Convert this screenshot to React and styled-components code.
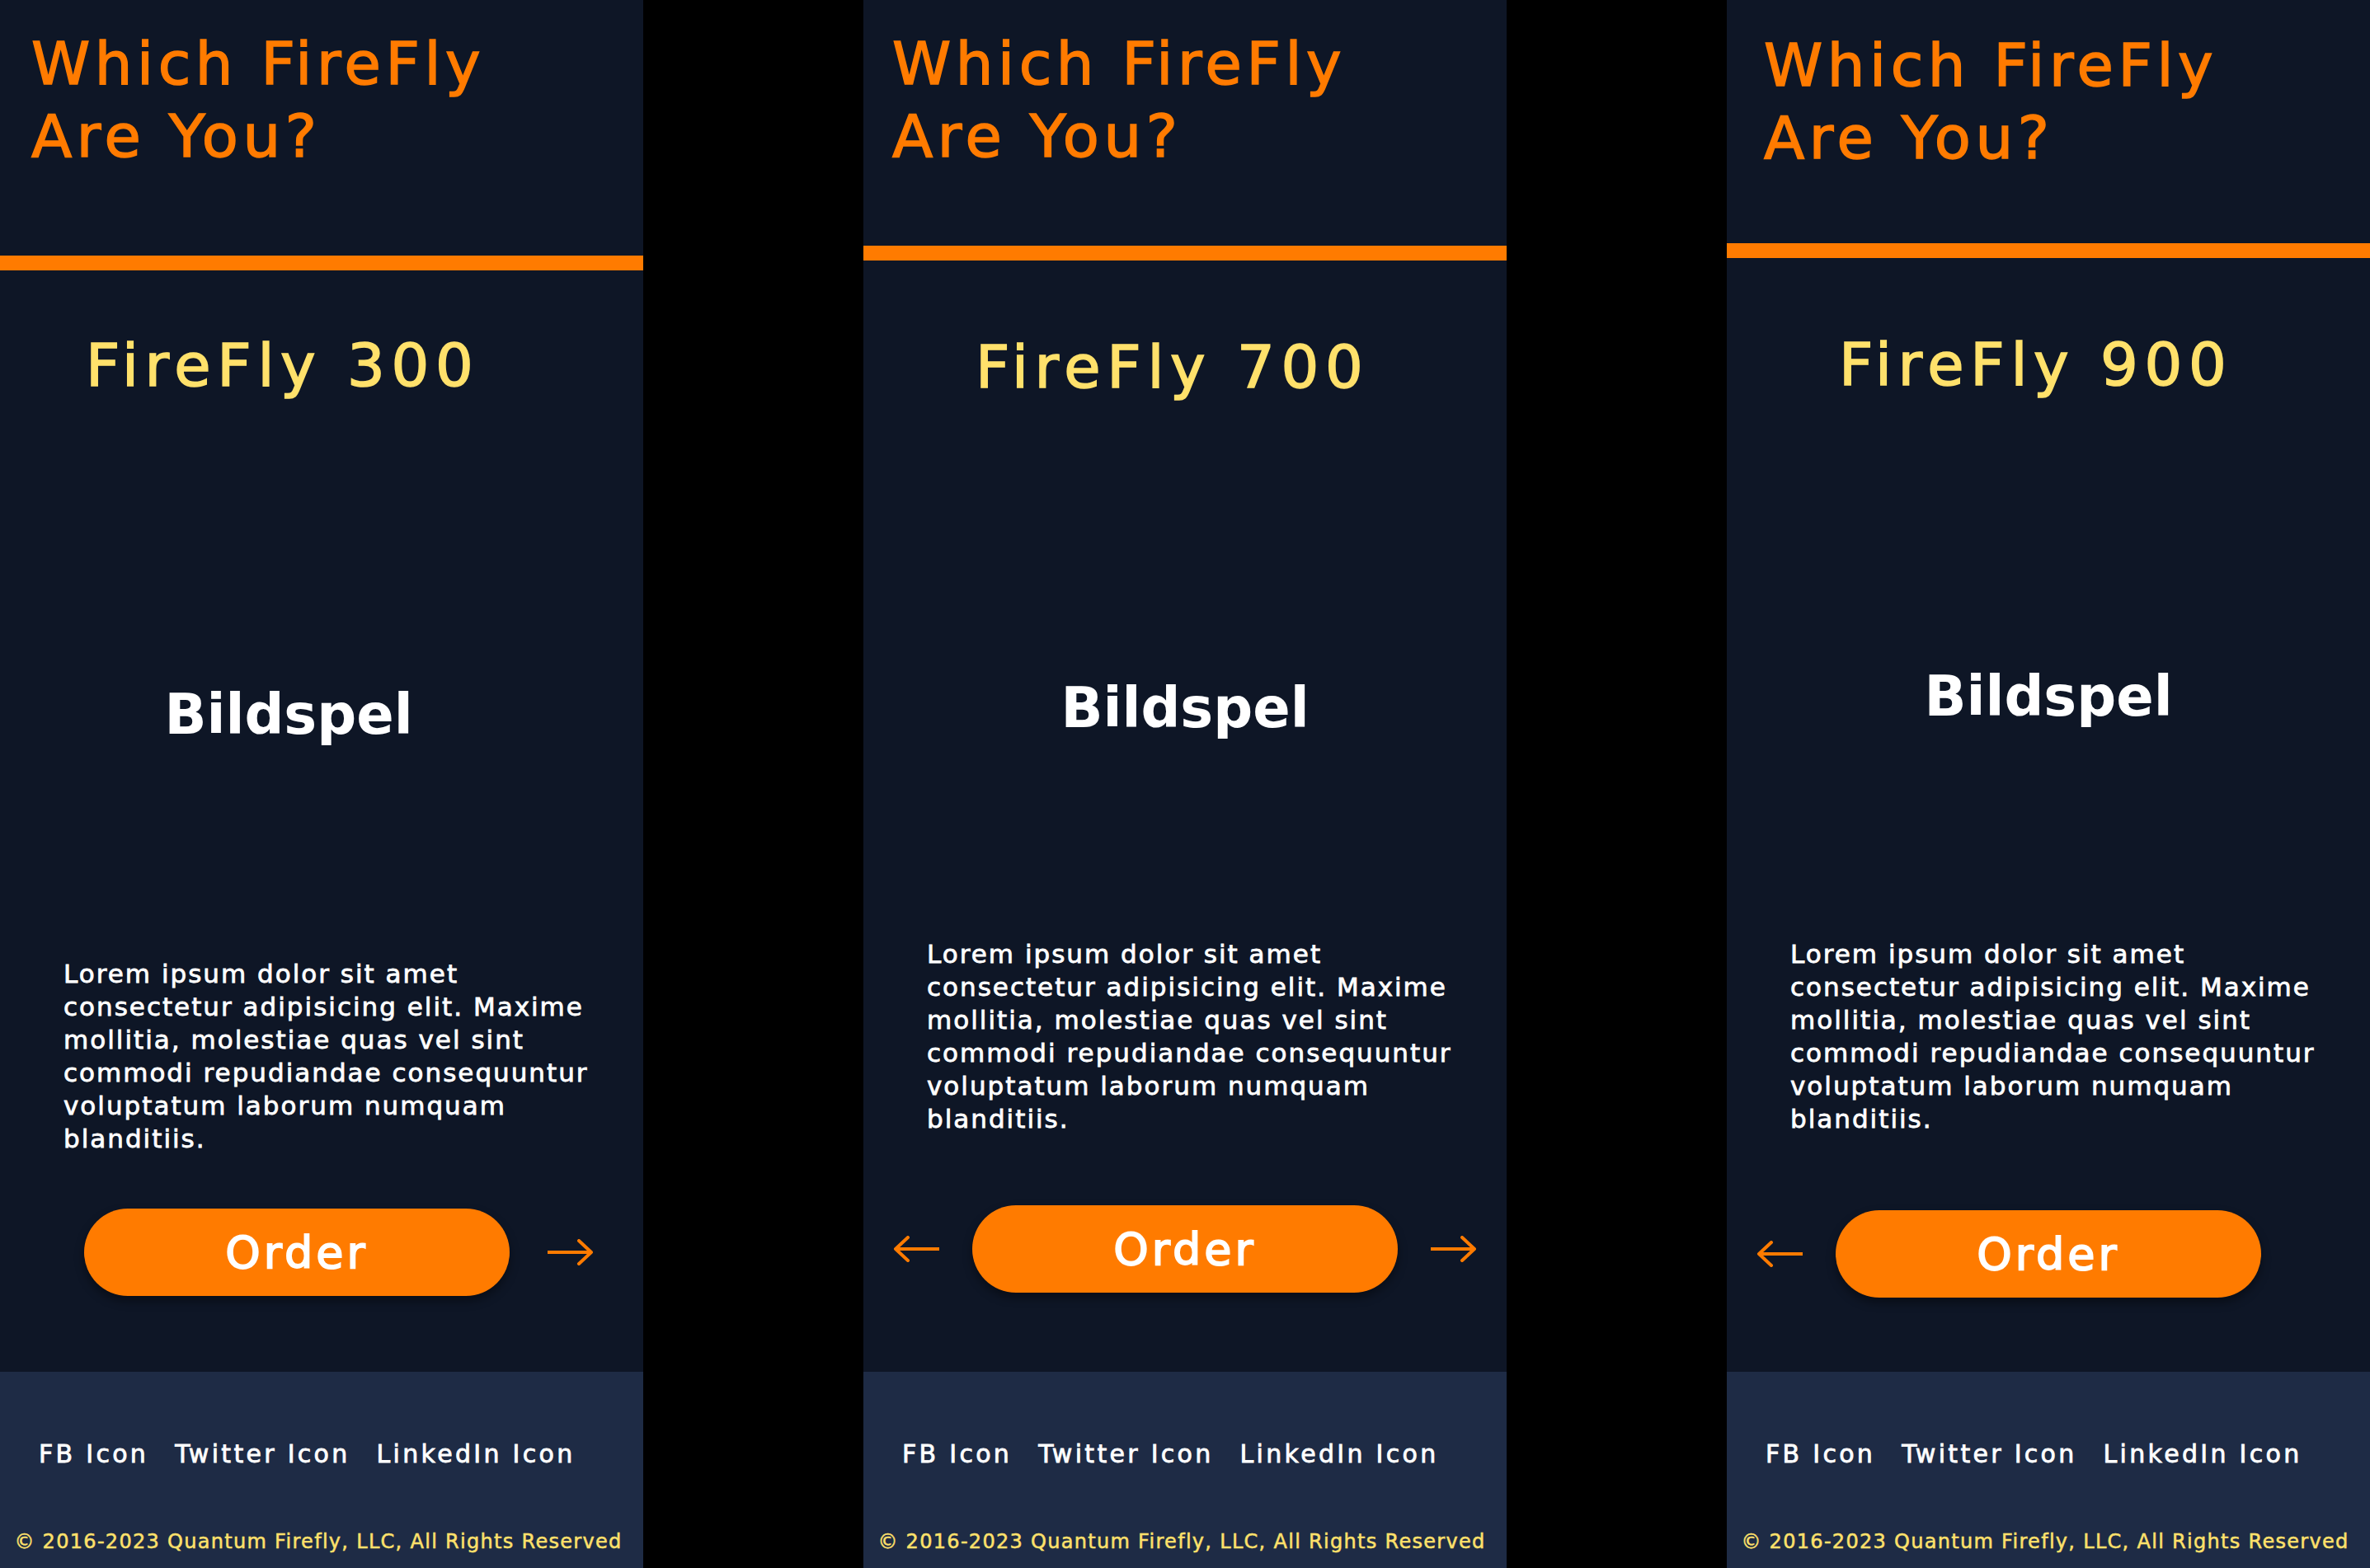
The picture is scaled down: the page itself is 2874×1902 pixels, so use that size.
import React from 'react';
import styled, { createGlobalStyle } from 'styled-components';

const GlobalStyle = createGlobalStyle`
	html, body {
		margin: 0;
		padding: 0;
		background: #000;
	}
	* {
		box-sizing: border-box;
	}
`;

const sans = `'DejaVu Sans', Verdana, sans-serif`;

const Page = styled.div`
	display: flex;
	justify-content: space-between;
	width: 2874px;
	height: 1902px;
	background: #000;
	font-family: ${sans};
`;

const Screen = styled.div`
	display: flex;
	flex-direction: column;
	width: 780px;
	height: 1902px;
	background: #0e1626;
`;

const Header = styled.header`
	height: ${p => p.$height}px;
	padding: ${p => p.$top}px 0 0 ${p => p.$left}px;
`;

const Title = styled.h1`
	margin: 0;
	font-size: 72px;
	font-weight: 400;
	line-height: 88px;
	letter-spacing: 5.6px;
	color: #ff7b00;
	-webkit-text-stroke: 1.6px #ff7b00;
`;

const Rule = styled.div`
	height: 18px;
	background: #ff7b00;
`;

const Main = styled.main`
	flex: 1;
	display: flex;
	flex-direction: column;
`;

const Model = styled.h2`
	margin: ${p => p.$gap}px 0 0;
	padding-left: ${p => p.$left}px;
	font-size: 72px;
	font-weight: 400;
	line-height: 88px;
	letter-spacing: 7.7px;
	color: #ffe16b;
	-webkit-text-stroke: 1.6px #ffe16b;
`;

const Slideshow = styled.div`
	margin-top: ${p => p.$gap}px;
	padding-right: ${p => p.$shift}px;
	text-align: center;
	font-size: 67px;
	font-weight: 700;
	line-height: 80px;
	color: #fff;
`;

const Blurb = styled.p`
	margin: ${p => p.$gap}px 0 0;
	padding-left: 77px;
	font-size: 31px;
	line-height: 40px;
	letter-spacing: 2px;
	color: #fff;
	-webkit-text-stroke: 0.8px #fff;
`;

const ActionRow = styled.div`
	display: flex;
	align-items: center;
	gap: ${p => p.$spacing}px;
	margin-top: ${p => p.$gap}px;
	padding-left: ${p => p.$pad}px;
`;

const OrderButton = styled.button`
	display: flex;
	align-items: center;
	justify-content: center;
	width: 516px;
	height: 106px;
	border: none;
	border-radius: 53px;
	background: #ff7b00;
	box-shadow: 0 6px 12px rgba(0, 0, 0, 0.4);
	font-family: ${sans};
	font-size: 54px;
	font-weight: 400;
	letter-spacing: 4px;
	color: #fff;
	-webkit-text-stroke: 1.8px #fff;
	cursor: pointer;
`;

const ArrowButton = styled.button`
	display: flex;
	padding: 0;
	border: none;
	background: none;
	cursor: pointer;
	transform: ${p => (p.$flip ? 'scaleX(-1)' : 'none')};
`;

const Footer = styled.footer`
	display: flex;
	flex-direction: column;
	height: 238px;
	padding-top: 82px;
	background: #1e2b45;
`;

const Social = styled.nav`
	display: flex;
	gap: 32px;
	padding-left: 47px;
`;

const SocialLink = styled.a`
	font-size: 30px;
	line-height: 36px;
	letter-spacing: 3.3px;
	color: #fff;
	text-decoration: none;
	-webkit-text-stroke: 0.8px #fff;
`;

const Copyright = styled.p`
	margin: 73px 0 0;
	padding-right: 8px;
	text-align: center;
	font-size: 24px;
	line-height: 30px;
	letter-spacing: 1.3px;
	color: #ffe16b;
	-webkit-text-stroke: 0.5px #ffe16b;
`;

const Arrow = ({ flip }) => (
	<ArrowButton $flip={flip} aria-label={flip ? 'Next' : 'Previous'}>
		<svg width="56" height="32" viewBox="0 0 56 32" fill="none">
			<path d="M56 16H3" stroke="#ff7b00" strokeWidth="4" />
			<path
				d="M18 2L3 16L18 30"
				stroke="#ff7b00"
				strokeWidth="4"
				strokeLinecap="round"
				strokeLinejoin="round"
			/>
		</svg>
	</ArrowButton>
);

const panels = [
	{
		model: '300',
		headLeft: 38,
		headTop: 33,
		headH: 310,
		nameGap: 71,
		nameLeft: 104,
		slideGap: 340,
		slideShift: 80,
		textGap: 254,
		rowGap: 65,
		rowPad: 102,
		rowSpacing: 46,
		prev: false,
		next: true
	},
	{
		model: '700',
		headLeft: 35,
		headTop: 33,
		headH: 298,
		nameGap: 85,
		nameLeft: 136,
		slideGap: 330,
		slideShift: 0,
		textGap: 238,
		rowGap: 85,
		rowPad: 36,
		rowSpacing: 40,
		prev: true,
		next: true
	},
	{
		model: '900',
		headLeft: 45,
		headTop: 35,
		headH: 295,
		nameGap: 85,
		nameLeft: 136,
		slideGap: 319,
		slideShift: 0,
		textGap: 252,
		rowGap: 91,
		rowPad: 36,
		rowSpacing: 40,
		prev: true,
		next: false
	}
];

const FireflyScreen = ({ p }) => (
	<Screen>
		<Header $height={p.headH} $top={p.headTop} $left={p.headLeft}>
			<Title>
				Which FireFly
				<br />
				Are You?
			</Title>
		</Header>
		<Rule />
		<Main>
			<Model $gap={p.nameGap} $left={p.nameLeft}>
				FireFly {p.model}
			</Model>
			<Slideshow $gap={p.slideGap} $shift={p.slideShift}>
				Bildspel
			</Slideshow>
			<Blurb $gap={p.textGap}>
				Lorem ipsum dolor sit amet
				<br />
				consectetur adipisicing elit. Maxime
				<br />
				mollitia, molestiae quas vel sint
				<br />
				commodi repudiandae consequuntur
				<br />
				voluptatum laborum numquam
				<br />
				blanditiis.
			</Blurb>
			<ActionRow $gap={p.rowGap} $pad={p.rowPad} $spacing={p.rowSpacing}>
				{p.prev && <Arrow />}
				<OrderButton>Order</OrderButton>
				{p.next && <Arrow flip />}
			</ActionRow>
		</Main>
		<Footer>
			<Social>
				<SocialLink href="#">FB Icon</SocialLink>
				<SocialLink href="#">Twitter Icon</SocialLink>
				<SocialLink href="#">LinkedIn Icon</SocialLink>
			</Social>
			<Copyright>© 2016-2023 Quantum Firefly, LLC, All Rights Reserved</Copyright>
		</Footer>
	</Screen>
);

const App = () => (
	<>
		<GlobalStyle />
		<Page>
			{panels.map(p => (
				<FireflyScreen key={p.model} p={p} />
			))}
		</Page>
	</>
);

export default App;
